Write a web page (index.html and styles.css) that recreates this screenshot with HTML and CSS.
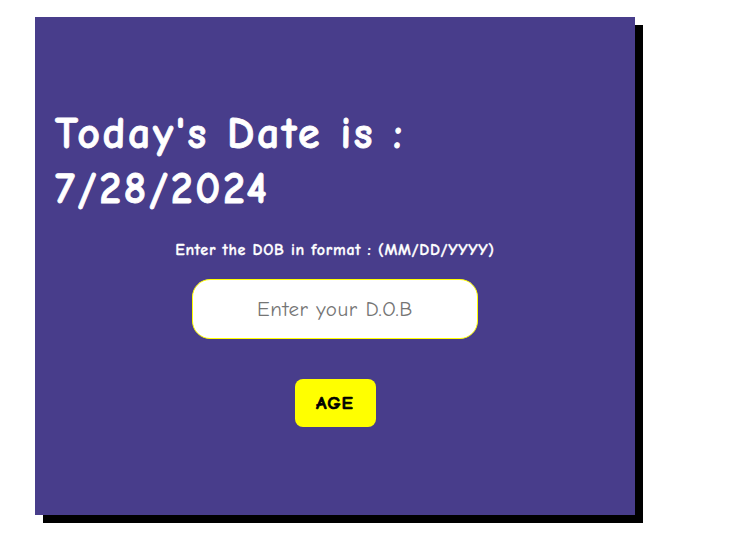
FILE: index.html
```html
<!DOCTYPE html>
<html>
<head>
<meta charset="utf-8">
<link rel="stylesheet" href="styles.css">
</head>
<body>
<div class="card">
  <h1 class="title">Today's Date is :<br>7/28/2024</h1>
  <p class="hint">Enter the DOB in format : (MM/DD/YYYY)</p>
  <input class="dob" type="text" placeholder="Enter your D.O.B">
  <button class="age-btn">AGE</button>
</div>
</body>
</html>
```
FILE: styles.css
```css
html, body {
  margin: 0;
  padding: 0;
  background: #ffffff;
}
body {
  font-family: "Comic Sans MS", "Comic Neue", cursive;
  padding: 17px 0 20px 35px;
}
.card {
  width: 600px;
  height: 498px;
  box-sizing: border-box;
  background: #483d8b;
  box-shadow: 8px 8px 0 #000;
  padding: 89px 20px 0 20px;
  display: flex;
  flex-direction: column;
  align-items: center;
  color: #fff;
}
.title {
  align-self: stretch;
  margin: 0;
  font-size: 44px;
  line-height: 55px;
  font-weight: bold;
  letter-spacing: 2.6px;
  -webkit-text-stroke: 0.8px #fff;
}
.hint {
  margin: 25px 0 0 0;
  font-size: 16px;
  font-weight: bold;
  letter-spacing: 0.7px;
  -webkit-text-stroke: 0.3px #fff;
}
.dob {
  margin-top: 20px;
  width: 286px;
  height: 60px;
  box-sizing: border-box;
  border: 1px solid #ffff00;
  border-radius: 18px;
  background: #fff;
  text-align: center;
  font-family: inherit;
  font-size: 21px;
  letter-spacing: 0.6px;
  outline: none;
}
.dob::placeholder {
  color: #757575;
}
.age-btn {
  margin-top: 40px;
  width: 81px;
  height: 48px;
  border: none;
  border-radius: 8px;
  background: #ffff00;
  color: #000;
  font-family: inherit;
  font-size: 19px;
  font-weight: bold;
  letter-spacing: 1px;
  -webkit-text-stroke: 0.7px #000;
}
```
